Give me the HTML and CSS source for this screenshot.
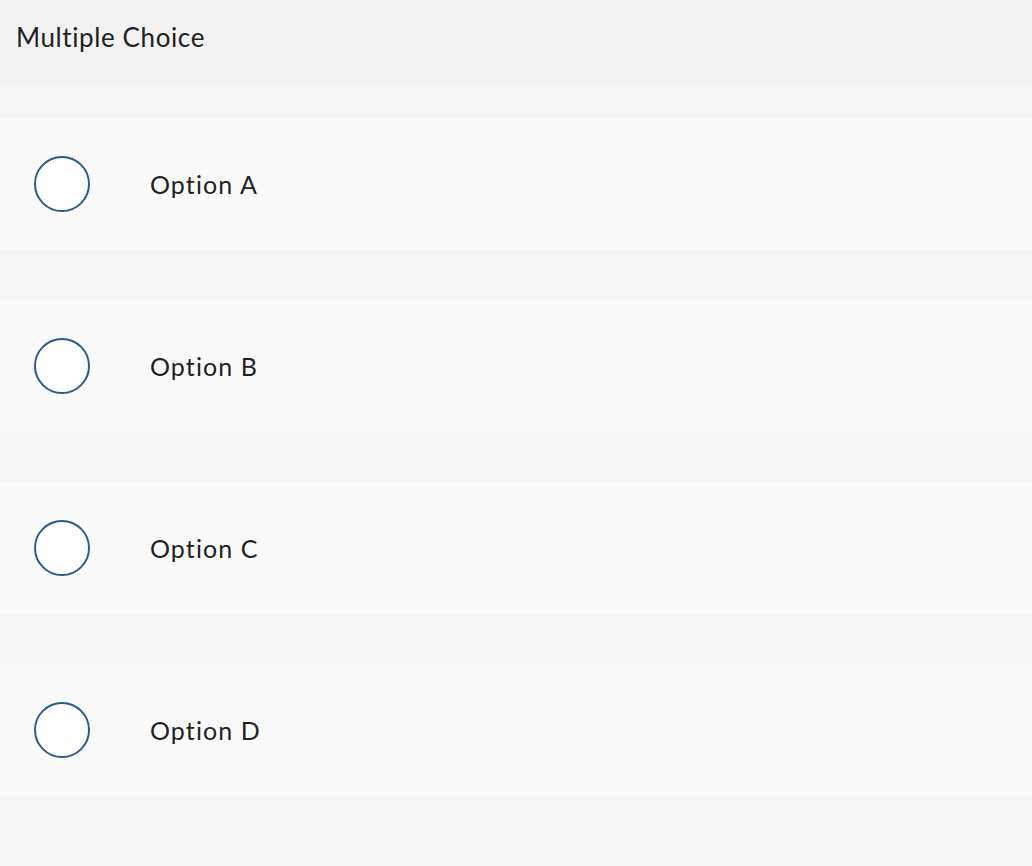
FILE: index.html
```html
<!DOCTYPE html>
<html>
<head>
<meta charset="utf-8">
<link rel="stylesheet" href="styles.css">
</head>
<body>
<header class="header">Multiple Choice</header>
<main class="options">
  <label class="option"><span class="radio"></span><span class="label">Option A</span></label>
  <label class="option"><span class="radio"></span><span class="label">Option B</span></label>
  <label class="option"><span class="radio"></span><span class="label">Option C</span></label>
  <label class="option"><span class="radio"></span><span class="label">Option D</span></label>
</main>
</body>
</html>
```
FILE: styles.css
```css
html, body {
  margin: 0;
  padding: 0;
  background: #f5f5f5;
  font-family: Lato, "Open Sans", sans-serif;
  font-variant-ligatures: none;
  color: #222;
}
.header {
  height: 86px;
  box-sizing: border-box;
  background: #f2f2f2;
  padding: 20px 16px 0;
  font-size: 26px;
  line-height: 34px;
  letter-spacing: 0.6px;
}
.options {
  display: flex;
  flex-direction: column;
  gap: 50px;
  padding: 32px 0 70px;
}
.option {
  height: 132px;
  background: #fafafa;
  display: flex;
  align-items: center;
}
.radio {
  width: 56px;
  height: 56px;
  box-sizing: border-box;
  border: 2px solid #2a5b8e;
  border-radius: 50%;
  background: #fff;
  margin-left: 34px;
  flex: none;
}
.label {
  margin-left: 60px;
  font-size: 25px;
  line-height: 32px;
  letter-spacing: 1.1px;
}
```
